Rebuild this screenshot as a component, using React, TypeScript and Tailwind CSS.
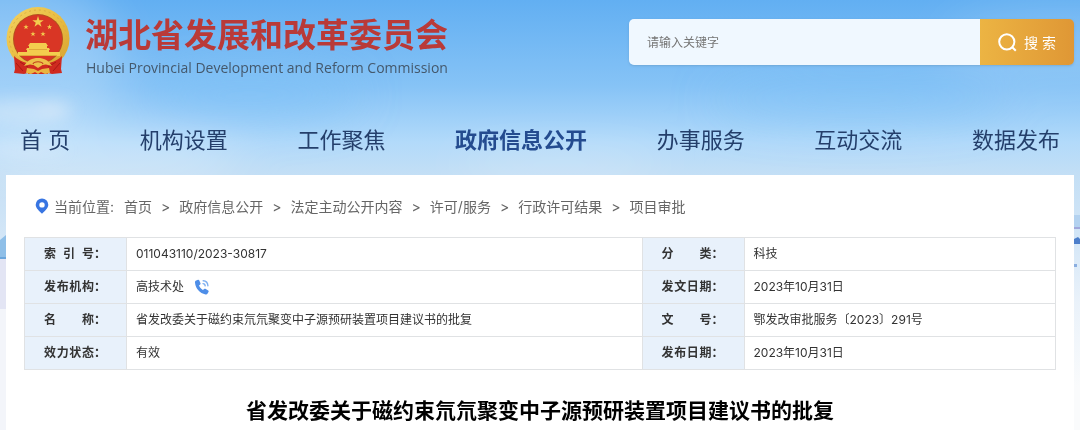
import { Fragment } from "react";

const navItems = [
  { label: "首 页" },
  { label: "机构设置" },
  { label: "工作聚焦" },
  { label: "政府信息公开", active: true },
  { label: "办事服务" },
  { label: "互动交流" },
  { label: "数据发布" },
];

const crumbs = ["首页", "政府信息公开", "法定主动公开内容", "许可/服务", "行政许可结果", "项目审批"];

const title = "省发改委关于磁约束氘氘聚变中子源预研装置项目建议书的批复";

const rows = [
  [{ label: "索 引 号", value: "011043110/2023-30817" }, { label: "分 类", value: "科技" }],
  [{ label: "发布机构", value: "高技术处", phone: true }, { label: "发文日期", value: "2023年10月31日" }],
  [{ label: "名 称", value: title }, { label: "文 号", value: "鄂发改审批服务〔2023〕291号" }],
  [{ label: "效力状态", value: "有效" }, { label: "发布日期", value: "2023年10月31日" }],
];

function Star({ x, y, r }: { x: number; y: number; r: number }) {
  return (
    <path
      transform={`translate(${x} ${y}) scale(${r})`}
      d="M0-1 .23-.31.95-.31.37.12.59.81 0 .38-.59.81-.37.12-.95-.31-.23-.31Z"
      fill="#f3cd4e"
    />
  );
}

function Emblem() {
  return (
    <svg viewBox="0 0 64 68" className="w-16 h-[68px] shrink-0" aria-hidden="true">
      <defs>
        <linearGradient id="gold" x1="0" y1="0" x2="1" y2="1">
          <stop offset="0" stopColor="#f3d362" />
          <stop offset="0.5" stopColor="#e9bd42" />
          <stop offset="1" stopColor="#d79f2e" />
        </linearGradient>
      </defs>
      <circle cx="32" cy="31.500" r="31.500" fill="url(#gold)" />
      <circle cx="32" cy="31.500" r="28.500" fill="none" stroke="#dcae40" strokeWidth="1" strokeDasharray="2 3" />
      <circle cx="32" cy="32" r="25" fill="#b3501f" />
      <circle cx="32" cy="32" r="24" fill="#d93625" />
      <Star x={32} y={15} r={6} />
      <Star x={20} y={20} r={2.8} />
      <Star x={43.5} y={20} r={2.8} />
      <Star x={27} y={27} r={2.8} />
      <Star x={37} y={27} r={2.8} />
      {/* gate tower */}
      <path d="M24 36h16l2 3h-1v3H23v-3h-1Z" fill="#f3cd4e" />
      <path d="M21 41h22l1 2h-1v2h11v4H12v-4h9v-2h-1Z" fill="#f3cd4e" />
      <path d="M13 48.500h38M23 42.500h18" stroke="#d99a30" strokeWidth=".7" />
      {/* ribbon */}
      <path d="M8 49c6 6 12 6 18 9l-4 8-4 1-10-1 1-4Z" fill="#cf2a20" />
      <path d="M56 49c-6 6-12 6-18 9l4 8 4 1 10-1-1-4Z" fill="#cf2a20" />
      <path d="M22 58h20v9H22Z" fill="#cf2a20" />
      <path d="M10 56l7 8M54 56l-7 8M14 55l8 5M50 55l-8 5" stroke="#a91913" strokeWidth="1" />
      <path d="M18 59c4-6 8-8 14-8s10 2 14 8l-8-2-6 4-6-4Z" fill="#edc04a" />
      <path d="M20 66l1-5 7 1 4 2 4-2 7-1 1 5-5 1-4-2-3 2-3-2-4 2Z" fill="#e9b540" />
      <path d="M27 57c1-3 9-3 10 0" fill="none" stroke="#c2401f" strokeWidth="1.200" />
    </svg>
  );
}

function Sky() {
  return (
    <svg
      viewBox="0 0 1080 430"
      preserveAspectRatio="none"
      className="absolute inset-0 w-full h-[430px] -z-10"
      aria-hidden="true"
    >
      <defs>
        <linearGradient id="sky" x1="0" y1="0" x2="0" y2="1">
          <stop offset="0" stopColor="#62aff2" />
          <stop offset="0.2" stopColor="#86c3f6" />
          <stop offset="0.33" stopColor="#b2dafa" />
          <stop offset="0.41" stopColor="#c4dff5" />
          <stop offset="0.55" stopColor="#d3e6f7" />
          <stop offset="0.7" stopColor="#eaf2fa" />
          <stop offset="0.9" stopColor="#fafbfc" />
        </linearGradient>
        <filter id="soft" x="-50%" y="-50%" width="200%" height="200%">
          <feGaussianBlur stdDeviation="22" />
        </filter>
        <filter id="puff" x="-50%" y="-50%" width="200%" height="200%">
          <feGaussianBlur stdDeviation="7" />
        </filter>
      </defs>
      <rect width="1080" height="430" fill="url(#sky)" />
      <g filter="url(#soft)" fill="#fff">
        <ellipse cx="10" cy="60" rx="110" ry="90" opacity=".22" />
        <ellipse cx="1060" cy="40" rx="120" ry="40" opacity=".12" />
        <ellipse cx="110" cy="160" rx="130" ry="25" opacity=".25" />
        <ellipse cx="560" cy="165" rx="110" ry="18" opacity=".2" />
        <ellipse cx="250" cy="95" rx="110" ry="22" fill="#7abff6" opacity=".6" />
        <ellipse cx="860" cy="100" rx="150" ry="20" fill="#7abff6" opacity=".45" />
      </g>
      <g filter="url(#puff)" fill="#dbecfb">
        <ellipse cx="22" cy="112" rx="42" ry="13" opacity=".45" />
        <ellipse cx="55" cy="110" rx="18" ry="11" opacity=".4" />
        <ellipse cx="25" cy="150" rx="40" ry="7" opacity=".4" />
      </g>
      {/* skyline at the page edges */}
      <path d="M0 240l6-5v24H0Z" fill="#8fbfe8" />
      <path d="M0 257h6v2H0Z" fill="#6ba6dc" />
      <path d="M0 259h6v50H0Z" fill="#e3e5f4" />
      <path d="M0 309h6v121H0Z" fill="#f3f5fa" />
      <path d="M1074 215h6v12h-6Z" fill="#b3d2f0" />
      <path d="M1074 227h6v2h-6Z" fill="#a0a8dc" />
      <path d="M1074 239l4-2 2 2v5h-6Z" fill="#4d7fcb" />
      <path d="M1074 264h3v3h-3Z" fill="#8aaee0" />
    </svg>
  );
}

function PinIcon() {
  return (
    <svg viewBox="0 0 14 16" className="w-[14px] h-4 mr-[5px]" aria-hidden="true">
      <path
        fillRule="evenodd"
        d="M7 .5a6.300 6.300 0 0 1 6.300 6.300C13.300 10.500 9.500 13 7 15.700 4.500 13 .7 10.500.7 6.800A6.300 6.300 0 0 1 7 .5Zm0 3.700a2.700 2.700 0 1 0 0 5.400 2.700 2.700 0 0 0 0-5.400Z"
        fill="#3875e2"
      />
    </svg>
  );
}

function PhoneIcon() {
  return (
    <svg viewBox="0 0 16 16" className="w-4 h-4" aria-hidden="true">
      <path
        d="M2.200 1.600 4 .8c.5-.2 1 0 1.200.5l1.300 3c.2.4 0 .9-.3 1.200L5 6.600c.7 1.900 2 3.300 3.900 4.400l1.300-1.100c.4-.3.8-.3 1.200-.1l2.800 1.700c.5.3.6.8.4 1.300l-1 1.800c-.4.7-1.200 1-2 .8C5.700 14.100 1.700 9.600 1 3.700c-.1-.9.3-1.700 1.200-2.100Z"
        fill="#4e8ee8"
      />
      <path d="M9 4.600c1.300.1 2.100 1 2.200 2.300M9.200 1.800c2.800.2 4.500 2 4.700 4.900" fill="none" stroke="#7fb0f0" strokeWidth="1.400" strokeLinecap="round" />
    </svg>
  );
}

export default function App() {
  return (
    <div className="relative isolate min-h-screen flex flex-col px-[6px] font-[Inter,'Noto_Sans_CJK_SC',sans-serif]">
      <Sky />

      {/* Header */}
      <header className="flex items-start justify-between pt-[7px]">
        <a href="#" className="flex items-start gap-[15px]">
          <Emblem />
          <span className="block pt-[6px]">
            <span className="block text-[33px] leading-[44px] font-bold text-[#b93a38] whitespace-nowrap">
              湖北省发展和改革委员会
            </span>
            <span className="block pl-px font-['Open_Sans',sans-serif] text-[14px] leading-[22px] text-[#44586c] whitespace-nowrap">
              Hubei Provincial Development and Reform Commission
            </span>
          </span>
        </a>
        <form className="flex mt-3 w-[445px] h-[46px] rounded-[5px] overflow-hidden shadow-sm">
          <input
            type="text"
            aria-label="请输入关键字"
            placeholder="请输入关键字"
            className="flex-1 min-w-0 bg-[#f0f8ff] px-[18px] pt-[2px] text-[12px] text-[#333] placeholder:text-[#757575] outline-none"
          />
          <button
            type="button"
            className="flex items-center justify-center gap-[7px] w-[94px] bg-linear-to-r from-[#ecb443] to-[#df9735] text-white text-[14px]"
          >
            <svg viewBox="0 0 19 19" className="w-[19px] h-[19px]" fill="none" stroke="currentColor" strokeWidth="2" aria-hidden="true">
              <circle cx="8.800" cy="8.800" r="7.600" />
              <path d="m13.800 13.800 4 4" />
            </svg>
            搜 索
          </button>
        </form>
      </header>

      {/* Main nav */}
      <nav className="flex justify-between px-[14px] pt-[45px] pb-[19px]">
        {navItems.map((item) => (
          <a
            key={item.label}
            href="#"
            className={
              item.active
                ? "text-[22px] leading-8 font-bold text-[#244b8f] whitespace-nowrap"
                : "text-[22px] leading-8 text-[#243f6b] whitespace-nowrap"
            }
          >
            {item.label}
          </a>
        ))}
      </nav>

      {/* Content */}
      <main className="flex-1 bg-white px-[18px]">
        <div className="flex items-center pl-[11px] h-[62px] text-[14px] text-[#666]">
          <PinIcon />
          <span className="mr-[10px]">当前位置:</span>
          {crumbs.map((crumb, i) => (
            <Fragment key={crumb}>
              {i > 0 && <span className="mx-[9px]">&gt;</span>}
              <a href="#">{crumb}</a>
            </Fragment>
          ))}
        </div>

        <table className="w-full table-fixed border-collapse text-[12px] text-[#333]">
          <colgroup>
            <col className="w-[102px]" />
            <col className="w-[50%]" />
            <col className="w-[102px]" />
            <col />
          </colgroup>
          <tbody>
            {rows.map((row) => (
              <tr key={row[0].label} className="h-[33px]">
                {row.map((cell) => (
                  <Fragment key={cell.label}>
                    <th scope="row" className="border border-[#e0e2e4] bg-[#e8f1fb] pl-[19px] text-left font-bold whitespace-nowrap">
                      <span className="inline-flex items-center">
                        <span className="w-[50px] [text-align-last:justify]">{cell.label}</span>
                        <span>：</span>
                      </span>
                    </th>
                    <td className="border border-[#e0e2e4] pl-[9px]">
                      <span className="flex items-center gap-[10px]">
                        {cell.value}
                        {"phone" in cell && (
                          <a href="#" aria-label="联系电话">
                            <PhoneIcon />
                          </a>
                        )}
                      </span>
                    </td>
                  </Fragment>
                ))}
              </tr>
            ))}
          </tbody>
        </table>

        <h1 className="pt-[25px] pb-[2px] text-center text-[21px] leading-8 font-bold text-black">{title}</h1>
      </main>
    </div>
  );
}
